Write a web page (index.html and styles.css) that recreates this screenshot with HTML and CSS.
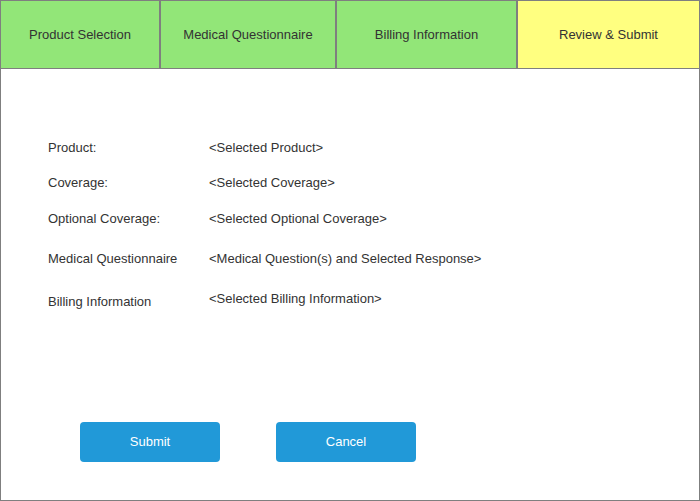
FILE: index.html
```html
<!DOCTYPE html>
<html>
<head>
<meta charset="utf-8">
<link rel="stylesheet" href="styles.css">
</head>
<body>
<div class="frame">
  <div class="tabs">
    <div class="tab tab-1 done">Product Selection</div>
    <div class="tab tab-2 done">Medical Questionnaire</div>
    <div class="tab tab-3 done">Billing Information</div>
    <div class="tab tab-4 current">Review &amp; Submit</div>
  </div>
  <div class="content">
    <div class="summary">
      <div class="row r1"><span class="label">Product:</span><span class="value">&lt;Selected Product&gt;</span></div>
      <div class="row r2"><span class="label">Coverage:</span><span class="value">&lt;Selected Coverage&gt;</span></div>
      <div class="row r3"><span class="label">Optional Coverage:</span><span class="value">&lt;Selected Optional Coverage&gt;</span></div>
      <div class="row r4"><span class="label">Medical Questionnaire</span><span class="value">&lt;Medical Question(s) and Selected Response&gt;</span></div>
      <div class="row r5"><span class="label low">Billing Information</span><span class="value">&lt;Selected Billing Information&gt;</span></div>
    </div>
    <div class="actions">
      <button class="btn">Submit</button>
      <button class="btn">Cancel</button>
    </div>
  </div>
</div>
</body>
</html>
```

FILE: styles.css
```css
* { box-sizing: border-box; }
html, body { margin: 0; padding: 0; background: #fff; }
body {
  font-family: "Liberation Sans", Arial, sans-serif;
  font-size: 13px;
  color: #333;
}
.frame {
  width: 700px;
  height: 501px;
  border: 1px solid #7f7f7f;
  display: flex;
  flex-direction: column;
}
.tabs {
  display: flex;
  height: 68px;
  border-bottom: 1px solid #7f7f7f;
}
.tab {
  display: flex;
  align-items: center;
  justify-content: center;
  border-right: 2px solid #7f7f7f;
  padding-bottom: 1px;
}
.tab-1 { width: 160px; }
.tab-2 { width: 176px; }
.tab-3 { width: 181px; }
.tab-4 { flex: 1; border-right: none; }
.done { background: #92e678; }
.current { background: #ffff80; }
.content {
  flex: 1;
  padding: 71px 0 0 47px;
  display: flex;
  flex-direction: column;
}
.summary { display: flex; flex-direction: column; }
.row {
  display: flex;
  align-items: flex-start;
  line-height: 15px;
}
.r2 { margin-top: 20px; }
.r3 { margin-top: 21px; }
.r4 { margin-top: 25px; }
.r5 { margin-top: 25px; }
.label { width: 161px; }
.low { margin-top: 3px; }
.actions {
  display: flex;
  gap: 56px;
  margin-top: 113px;
  padding-left: 32px;
}
.btn {
  width: 140px;
  height: 40px;
  border: none;
  border-radius: 4px;
  background: #2199d8;
  color: #fff;
  font-family: "Liberation Sans", Arial, sans-serif;
  font-size: 13px;
  padding: 0 0 2px;
}
```
